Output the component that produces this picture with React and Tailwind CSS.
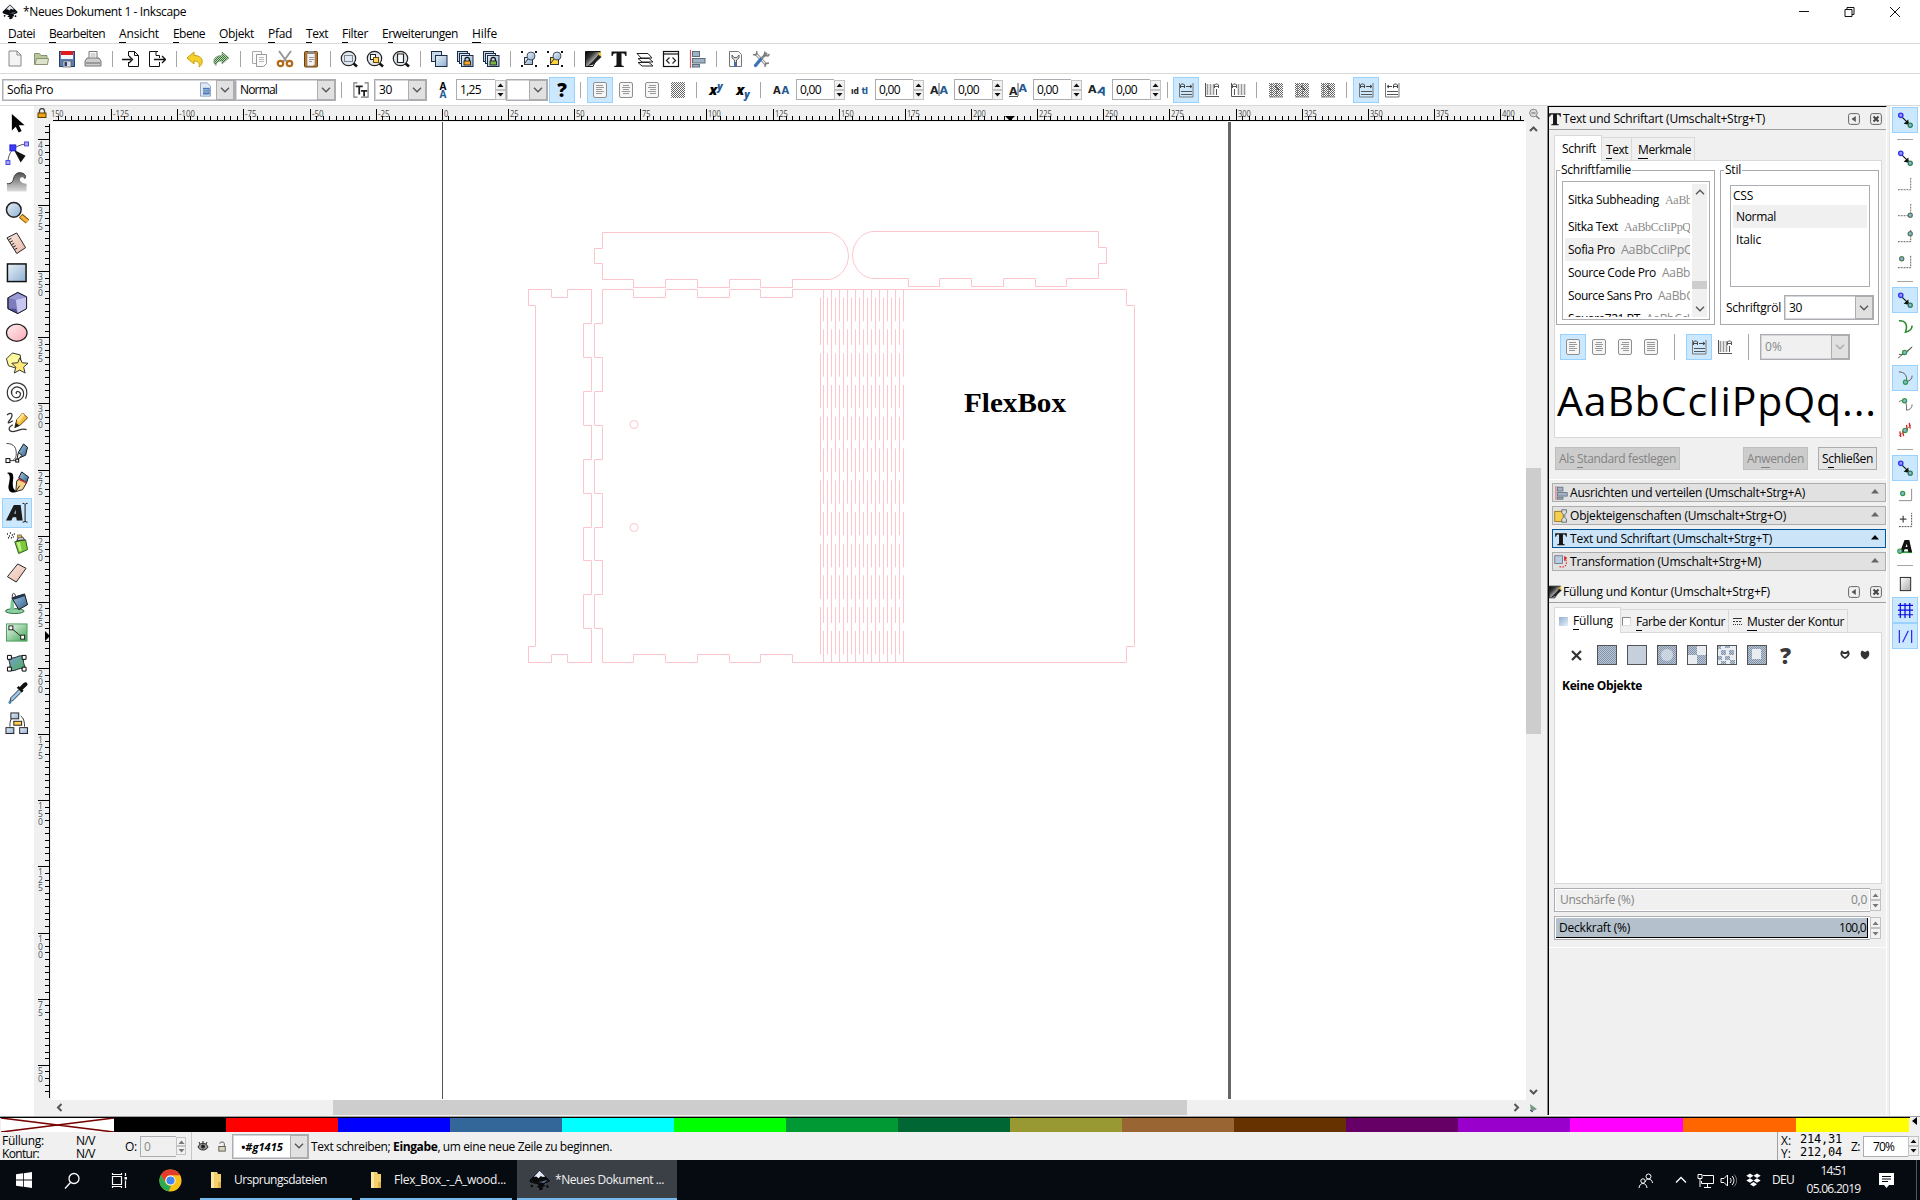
import React, { useLayoutEffect, useRef, useState } from "react";

/* Text whose tracking is adjusted so that it takes up `w` pixels. */
function T({ w, className = "", children }) {
  const ref = useRef(null);
  const [ls, setLs] = useState(0);
  useLayoutEffect(() => {
    const el = ref.current;
    if (w && el) {
      const n = el.textContent.length;
      setLs((w - el.getBoundingClientRect().width) / n);
    }
  }, []);
  return (
    <span ref={ref} className={"inline-block shrink-0 whitespace-pre " + className} style={{ letterSpacing: ls }}>
      {children}
    </span>
  );
}
const U = ({ children }) => <span className="border-b border-current leading-none">{children}</span>;

const S = ({ s = 18, v = 18, children, className = "" }) => (
  <svg width={s} height={s} viewBox={`0 0 ${v} ${v}`} fill="none" className={"shrink-0 " + className}>
    {children}
  </svg>
);

/* ---------- shared gradients ---------- */
const Defs = () => (
  <svg width="0" height="0" className="absolute">
    <defs>
      <linearGradient id="blue" x1="0" y1="0" x2="1" y2="1"><stop offset="0" stopColor="#e8f0f8" /><stop offset="1" stopColor="#8fb0d2" /></linearGradient>
      <linearGradient id="steel" x1="0" y1="0" x2="1" y2="1"><stop offset="0" stopColor="#a9cbe6" /><stop offset="1" stopColor="#2f5f8a" /></linearGradient>
      <linearGradient id="pink" x1="0" y1="0" x2="1" y2="1"><stop offset="0" stopColor="#fff0f2" /><stop offset="1" stopColor="#f9a9b4" /></linearGradient>
      <linearGradient id="peach" x1="0" y1="0" x2="1" y2="1"><stop offset="0" stopColor="#fbeae4" /><stop offset="1" stopColor="#e9b9a6" /></linearGradient>
      <linearGradient id="dark" x1="0" y1="0" x2="1" y2="1"><stop offset="0" stopColor="#000" /><stop offset=".3" stopColor="#333" /><stop offset=".75" stopColor="#fff" /></linearGradient>
      <linearGradient id="gray" x1="0" y1="0" x2="1" y2="1"><stop offset="0" stopColor="#fff" /><stop offset="1" stopColor="#aaa" /></linearGradient>
      <linearGradient id="wave" x1="0" y1="0" x2="0" y2="1"><stop offset="0" stopColor="#555" /><stop offset="1" stopColor="#ddd" /></linearGradient>
      <linearGradient id="green" x1="0" y1="0" x2="1" y2="1"><stop offset="0" stopColor="#f2faf3" /><stop offset="1" stopColor="#3fa553" /></linearGradient>
      <linearGradient id="mesh" x1="0" y1="0" x2="1" y2="1"><stop offset="0" stopColor="#7aa0d0" /><stop offset="1" stopColor="#4eae58" /></linearGradient>
      <pattern id="dots" width="2" height="2" patternUnits="userSpaceOnUse"><rect width="1" height="1" fill="#666" /><rect x="1" y="1" width="1" height="1" fill="#666" /></pattern>
      <pattern id="dotg" width="2" height="2" patternUnits="userSpaceOnUse"><rect width="2" height="2" fill="#b9dcae" /><rect width="1" height="1" fill="#3c6b3c" /><rect x="1" y="1" width="1" height="1" fill="#3c6b3c" /></pattern>
      <pattern id="dotb" width="2" height="2" patternUnits="userSpaceOnUse"><rect width="2" height="2" fill="#b9c6d6" /><rect width="1" height="1" fill="#8494a8" /><rect x="1" y="1" width="1" height="1" fill="#8494a8" /></pattern>
    </defs>
  </svg>
);

const Logo = ({ s = 16, taskbar }) => (
  <S s={s} v={16}>
    <path d="M8 .5 15.200 7.600c.8.9 0 1.600-1.200 2l-2.400.8c-.6.4.9.9.6 1.500-.2.5-1.600.4-1.700.9 0 .5.8.8.2 1.300-.9.8-2.300 1.600-3.300.9-.7-.5.5-1 .2-1.500-.4-.6-2-.3-2.200-1 .2-.7 1.800-.7 1.600-1.200C6.700 10.700 3.500 10.500 2 9.700 1 9.200 0 8.600.8 7.600z" fill="#0b0b0e" stroke={taskbar ? "#55606e" : "none"} strokeWidth=".4" />
    <path d="M8 1.200 12 5.200 10.300 5.600 8.900 4.800 7.400 6.400 5.700 5.300 4 5.600z" fill="#e4ebf6" />
    <path d="M2 8.200c3 1 7 1.200 9 0l3-.5-3 2z" fill="#6f86ad" opacity=".8" />
    <circle cx="2.600" cy="11.800" r=".9" fill="#0b0b0e" /><circle cx="13.500" cy="12.200" r=".9" fill="#0b0b0e" />
  </S>
);

/* ---------- command bar icons ---------- */
const Page = ({ x = 3, y = 1, w = 12, h = 15, f = "#fff", c = "#222" }) => (
  <path d={`M${x} ${y}h${w - 4}l4 4v${h - 4}h-${w}z M${x + w - 4} ${y}v4h4`} fill={f} stroke={c} />
);
const cmd = {
  new: <Page c="#888" f="#f4f4f4" />,
  open: <><path d="M2.500 14.500V3.500h5l1.500 2h6v9z" fill="#b9c99e" stroke="#8a9274" /><path d="m3 14.500 1.500-6h12l-1 6z" fill="#dbe4c8" stroke="#8a9274" /></>,
  save: <><rect x="1.500" y="1.500" width="15" height="15" fill="#5b7fb5" stroke="#27406d" /><rect x="3" y="1" width="12" height="4" fill="#e01b1b" /><rect x="3" y="5" width="12" height="4" fill="#f3f6fa" /><rect x="5" y="11" width="8" height="6" fill="#ddd" stroke="#555" strokeWidth=".7" /><rect x="6.500" y="12" width="2.500" height="4" fill="#27406d" /></>,
  print: <><path d="M5 8V1.500h8V8" fill="#fff" stroke="#777" /><path d="M6.500 4h5M6.500 6h5" stroke="#aaa" /><path d="M3 8h12l2 3v5H1v-5z" fill="#ccc" stroke="#777" /><path d="M2 13h14" stroke="#666" /></>,
  imp: <><path d="M6.500 6V1.500h6l4 4v11h-10V12M12.500 1.500v4h4" fill="#fff" stroke="#111" /><path d="M0 9.500h9M7 6l3.500 3.500L7 13" stroke="#111" strokeWidth="1.300" /></>,
  exp: <><path d="M10 1.500H1.500v15h10V12M8 1.500v4h3.500V8" fill="#fff" stroke="#111" /><path d="M6 9.500h11M14 6l3.500 3.500L14 13" stroke="#111" strokeWidth="1.300" /></>,
  undo: <path d="M1 8 8 2v3.500c6 0 9 3 8 7.500-.5 2-1.500 3-3 4 1-4-1-6-5-6V14z" fill="#f5cf2a" stroke="#c59e12" />,
  redo: <path d="M17 8 10 2v3.500C4 5.500 1 8.500 2 13c.5 1 1 1.500 2 2.500 0-3 2-4.500 6-4.500V14z" fill="url(#dotg)" stroke="#6a8f66" strokeWidth=".6" />,
  copy: <><path d="M2.500 1.500h9v12h-9z" fill="#fafafa" stroke="#aaa" /><path d="M6.500 4.500h10v9l-3 3h-7z" fill="#fafafa" stroke="#999" /><path d="M9 7.500h5M9 9.500h5M9 11.500h5" stroke="#bbb" /></>,
  cut: <><path d="m3 1 8 11M15 1 7 12" stroke="#999" strokeWidth="2" /><circle cx="4.500" cy="13.500" r="2.700" stroke="#b5691c" strokeWidth="2.200" /><circle cx="13.500" cy="13.500" r="2.700" stroke="#b5691c" strokeWidth="2.200" /></>,
  paste: <><rect x="2.500" y="1.500" width="13" height="15.500" rx="1" fill="#b9772a" stroke="#6d4310" /><path d="M5 3.500h8v11l-2 1.500H5z" fill="#f3f3f3" stroke="#777" strokeWidth=".6" /><path d="M7 7.500h5M7 9.500h5M7 11.500h3" stroke="#999" /><rect x="6" y="1" width="6" height="3" fill="#888" /></>,
  zoom: (k) => <><path d="m13 13 4 3.500" stroke="#111" strokeWidth="2.600" /><circle cx="8.500" cy="8.500" r="7.200" fill="#dfe8f2" stroke="#222" strokeWidth="1.200" />
    {k === 0 && <rect x="4.500" y="5.500" width="8" height="6" stroke="#222" strokeDasharray="1 1" />}
    {k === 1 && <><rect x="4.500" y="4.500" width="5" height="5" fill="#fff" stroke="#222" /><rect x="7.500" y="7.500" width="5" height="5" fill="#ffd45c" stroke="#6b4a00" /></>}
    {k === 2 && <path d="M5.500 4h6v8.500h-6z" fill="#fff" stroke="#222" strokeWidth="1.200" />}</>,
  dup: (k) => <><rect x="1.500" y="1.500" width="10" height="10" fill="#c9d9ea" stroke="#1c2c44" />{k > 0 && <rect x="3.500" y="3.500" width="10" height="10" fill="#dbe7f3" stroke="#1c2c44" />}<rect x="5.500" y="5.500" width="11.500" height="11" fill="url(#blue)" stroke="#1c2c44" />
    {k > 0 && <><path d="M9 11V9.500a2.200 2.200 0 0 1 4.400 0V11" stroke="#111" strokeWidth="1.200" /><rect x="8" y="11" width="6.500" height="4" fill={k === 1 ? "#f7a828" : "#7cb342"} stroke="#111" strokeWidth=".8" /></>}</>,
  grp: (k) => <><path d="M1 1h2v2H1zM15 1h2v2h-2zM1 15h2v2H1zM15 15h2v2h-2z" fill="#111" /><rect x="4.500" y="7.500" width="8" height="7" fill={k ? "#ffd23e" : "url(#blue)"} stroke="#333" /><circle cx="11" cy="6" r="4" fill="url(#blue)" stroke="#456" /><path d="M8 9 5 13" stroke="#333" /></>,
  fill: <><path d="M1.500 1.500h15L9 16.500H1.500z" fill="url(#dark)" stroke="#111" /><path d="M15.500 4 8 12l-4.500 4 6-1.500L17.500 7z" fill="#222" /><path d="m14 4.500 2.500-3.500 1 6z" fill="#f2c12e" /></>,
  text: <path d="M1.500 1.500h15V6h-1.200c-.3-2-1-2.700-3.800-2.700V14c0 1.500.5 1.700 2.300 1.900V17H4.200v-1.100c1.800-.2 2.300-.4 2.300-1.900V3.300C3.700 3.300 3 4 2.700 6H1.500z" fill="#151515" />,
  layers: <><path d="M2 12.500 6 16h11l-4-3.500z" fill="#fff" stroke="#222" /><path d="M2 8.500 6 12h11l-4-3.500z" fill="#fff" stroke="#222" /><path d="M1 3.500 5 8h11l-4-4.500z" fill="#fff" stroke="#222" /></>,
  xml: <><rect x="1.500" y="1.500" width="15" height="15" fill="#fff" stroke="#111" strokeWidth="1.200" /><path d="M1.500 4h15" stroke="#111" strokeWidth="1.200" /><path d="m7.500 7.500-3 3 3 3M10.500 7.500l3 3-3 3" stroke="#222" strokeWidth="1.200" /></>,
  align: <><path d="M2.500 0v18" stroke="#d85a5a" strokeWidth="1.200" /><rect x="4.500" y="1.500" width="7" height="5" fill="#9fb1c4" stroke="#5d6c7c" /><rect x="4.500" y="8.500" width="12.500" height="4.500" fill="#9fb1c4" stroke="#5d6c7c" /><rect x="4.500" y="14.500" width="7" height="2.500" fill="#9fb1c4" stroke="#5d6c7c" /></>,
  prefs: <><path d="M3.500 1.500h9l3 3v12h-12z" fill="#fafafa" stroke="#777" /><path d="M6 5v3l2.500 2v6.500h2V10L13 8V5l-2 2.500H8z" fill="#ddd" stroke="#555" strokeWidth=".9" /><path d="M8.500 12h2v5h-2z" fill="#3d73b8" /></>,
  tools: <><path d="m3.500 3.500 11 11.500" stroke="#888" strokeWidth="3" /><path d="m3.500 3.500 11 11.500" stroke="#eee" strokeWidth="1.200" /><path d="m15 3-6 6" stroke="#888" strokeWidth="2.600" /><path d="m8.500 9.500-5 6" stroke="#3d73b8" strokeWidth="3.400" strokeLinecap="round" /><path d="M1 4.500 3.500 5 5 3.500 4.500 1M13 1.500l-1 4 4 .5 1.500-2M13 17l.5-3.500L17 13" stroke="#777" strokeWidth="1.300" /></>,
};
const commands = [
  cmd.new, cmd.open, cmd.save, cmd.print, null, cmd.imp, cmd.exp, null, cmd.undo, cmd.redo, null, cmd.copy, cmd.cut, cmd.paste, null,
  cmd.zoom(0), cmd.zoom(1), cmd.zoom(2), null, cmd.dup(0), cmd.dup(1), cmd.dup(2), null, cmd.grp(0), cmd.grp(1), null,
  cmd.fill, cmd.text, cmd.layers, cmd.xml, cmd.align, null, cmd.prefs, cmd.tools,
];

/* ---------- small widgets ---------- */
const Chev = ({ c = "#555" }) => <svg width="10" height="6" viewBox="0 0 10 6"><path d="M1 .8 5 4.800 9 .8" fill="none" stroke={c} strokeWidth="1.300" /></svg>;
const ArrowBtn = ({ dis }) => (
  <div className="h-full w-[18px] shrink-0 bg-[#e1e1e1] border border-[#adadad] flex items-center justify-center"><Chev c={dis ? "#aaa" : "#555"} /></div>
);
const Combo = ({ className, children, dis }) => (
  <div className={"flex items-stretch shrink-0 border border-[#abadb3] shadow-[inset_0_0_0_1px_#d5d6d9] " + (dis ? "bg-[#f0f0f0] " : "bg-white ") + className}>
    <div className="flex-1 flex items-center pl-1 min-w-0 overflow-hidden">{children}</div>
    <ArrowBtn dis={dis} />
  </div>
);
const Spinner = ({ dis, className = "w-[11px] h-[20px]" }) => {
  const c = dis ? "#777" : "#111";
  return (
    <div className={"flex flex-col shrink-0 " + className}>
      {[0, 1].map((i) => (
        <div key={i} className="flex-1 border border-[#c2c2c2] bg-[#f2f2f2] flex items-center justify-center">
          <svg width="7" height="4" viewBox="0 0 7 4"><path d={i ? "M.5 0h6L3.500 3.500z" : "M.5 4h6L3.500.5z"} fill={c} /></svg>
        </div>
      ))}
    </div>
  );
};
const SpinBox = ({ className, children }) => (
  <div className={"flex items-center shrink-0 " + className}>
    <div className="flex-1 h-[21px] border border-[#abadb3] border-r-0 bg-white flex items-center pl-[3px]">{children}</div>
    <Spinner />
  </div>
);
const Sep = ({ className = "h-4" }) => <div className={"w-px bg-[#a6a6a6] shrink-0 " + className} />;
const Cell = ({ on, className = "", children }) => (
  <div className={"w-[26px] h-[26px] shrink-0 flex items-center justify-center border " + (on ? "bg-[#cce8ff] border-[#99d1ff] " : "border-transparent ") + className}>{children}</div>
);
const Al = ({ k }) => (
  <S s={16} v={16}><rect x="1.500" y=".5" width="13" height="15" rx="1.500" fill="#f6f6f6" stroke="#8f8f8f" />
    <path d={["M4 3.500h7M4 5.500h8M4 7.500h6M4 9.500h8M4 11.500h6", "M5 3.500h6M4 5.500h8M5 7.500h6M4 9.500h8M5 11.500h6", "M5 3.500h7M4 5.500h8M6 7.500h6M4 9.500h8M6 11.500h6", "M4 3.500h8M4 5.500h8M4 7.500h8M4 9.500h8M4 11.500h8"][k]} stroke="#999" /></S>
);
const Dir = ({ k, dis }) => (
  <S s={16} v={16}>
    {dis ? <><rect x="1" y="1" width="14" height="14" fill="url(#dots)" /><path d="M3.500 1v14M8.500 1v14M1 15h14" stroke="#888" /><path d="M7 4l4 4-4 4" stroke="#555" /></> : k === 1 || k === 2 ? <>
      <path d="M1.500 1v13.500H15" stroke="#555" /><path d={k === 1 ? "M3.500 2v11M6.500 2v11M9.500 2v11" : "M8.500 2v11M11.500 2v11M14.500 2v11"} stroke="#999" strokeWidth="1.600" /><path d={k === 1 ? "M10.500 6V3l1-1h2l1 1v3M10.500 4.500h4M12.500 7v6" : "M2.500 6V3l1-1h2l1 1v3M2.500 4.500h4M4.500 7v6"} stroke="#555" /></> : <>
      <path d="M1.500 1v14H15V1" stroke="#777" /><path d={k === 3 ? "M9.500 6V3l1-1h2l1 1v3M9.500 4.500h4M3 4.500h5M5 3 3 4.500 5 6" : "M2.500 6V3l1-1h2l1 1v3M2.500 4.500h4M8 4.500h6M12 3l2 1.500L12 6"} stroke="#444" /><path d="M3 9.500h11M3 12.500h11" stroke="#555" /></>}
  </S>
);

/* ---------- rulers ---------- */
const K = 66.143;
function HRuler() {
  const t = [];
  for (let i = -60; i <= 165; i++) {
    const x = Math.floor(442.3 + (i * K) / 10) - 51;
    if (x < 1.500 || x > 1473) continue;
    const major = i % 10 === 0;
    const v = (i / 10) * 25;
    t.push(<path key={i} d={`M${x + 0.5} ${major ? 3 : 10}V15`} stroke="#000" />);
    if (major) t.push(<text key={"t" + i} x={x + 2} y="11" fontSize="9" textLength={String(Math.abs(v)).length * 4.300 + (v < 0 ? 3 : 0)} lengthAdjust="spacingAndGlyphs" fill="#444">{v}</text>);
  }
  return (
    <svg width="1475" height="16" className="shrink-0" fontFamily="Open Sans, sans-serif">
      <text x="0" y="11" fontSize="9" textLength="12.500" lengthAdjust="spacingAndGlyphs" fill="#444">150</text>
      {t}<path d="M2 14.500H1473" stroke="#000" /><path d="M954 10h10l-5 5z" fill="#000" />
    </svg>
  );
}
function VRuler() {
  const t = [];
  for (let i = -5; i <= 160; i++) {
    const y = Math.floor(139.300 + (i * K) / 10) - 122;
    if (y < 1 || y > 975) continue;
    const major = i % 10 === 0;
    t.push(<path key={i} d={`M${major ? 4 : 11} ${y + 0.5}H16`} stroke="#000" />);
    if (major)
      String(400 - (i / 10) * 25).split("").forEach((c, j) => t.push(<text key={i + "-" + j} x="4" y={y + 8.500 + j * 8} fontSize="8.500" fill="#456">{c}</text>));
  }
  return (
    <svg width="17" height="978" className="shrink-0" fontFamily="Open Sans, sans-serif">
      {t}<path d="M15.500 2V976" stroke="#000" /><path d="M11 509v10l5-5z" fill="#000" />
    </svg>
  );
}

/* ---------- drawing ---------- */
const ys = [323.5, 357.5, 391.5, 425.5, 459.5, 493.5, 527.5, 560.5, 594.5, 628.5];
const evenSeg = [[263, 405], [430, 595], [620, 786], [811, 976], [1001, 1167], [1191, 1333]];
const oddSeg = [[238, 334], [358, 500], [525, 691], [715, 881], [906, 1072], [1096, 1239], [1263, 1357]];
function Drawing() {
  const left = "M528.500 289.500H551.500V297.500H567.500V289.500H591.500" + ys.map((y, i) => `V${y}H${i % 2 ? 591.5 : 583.5}`).join("") + "V662.500H567.500V654.500H551.500V662.500H528.500V646.500H535.500V305.500H528.500Z";
  const main = "M602.500 289.500" + ys.map((y, i) => `V${y}H${i % 2 ? 602.5 : 594.5}`).join("") + "V662.500H633.500V654.500H665.500V662.500H697.500V654.500H729.500V662.500H760.500V654.500H792.500V662.500H1126.500V646.500H1134.500V305.500H1126.500V289.500H792.500V297.500H760.500V289.500H729.500V297.500H697.500V289.500H665.500V297.500H633.500V289.500Z";
  return (
    <svg width="1475" height="978" viewBox="51 122 1475 978" className="shrink-0 bg-white">
      <path d="M442.500 122V1099" stroke="#555" />
      <rect x="1228" y="122" width="3" height="977" fill="#666" />
      <g fill="none" stroke="#ffc5cc">
        <path d={left} /><path d={main} />
        <path d="M602.500 232.500H829.500A24 24 0 0 1 829.500 279.500H792.500V287.500H760.500V279.500H729.500V287.500H697.500V279.500H665.500V287.500H633.500V279.500H602.500V263.500H594.500V248.500H602.500Z" />
        <path d="M871.500 231.500H1098.500V247.500H1106.500V263.500H1098.500V278.500H1066.500V286.500H1035.500V278.500H1003.500V286.500H971.500V278.500H939.500V286.500H908.500V278.500H871.500A24 24 0 0 1 871.500 231.500Z" />
        {Array.from({ length: 22 }, (_, i) => (
          <path key={i} d={(i % 2 ? oddSeg : evenSeg).map(([a, b]) => `M${Math.floor(820 + i * 3.98) + 0.5} ${210 + a / 3}V${210 + b / 3}`).join("")} />
        ))}
        <circle cx="634" cy="424.500" r="4" /><circle cx="634" cy="527.500" r="4" />
      </g>
      <text x="964" y="411.500" fontSize="28" fontWeight="700" fontFamily="Liberation Serif, serif" textLength="102" lengthAdjust="spacingAndGlyphs">FlexBox</text>
    </svg>
  );
}

/* ---------- toolbox ---------- */
const tools = [
  <path d="M7 3v17l4-4 3 6 3-1.500-3-6h6z" fill="#000" />,
  <><path d="M3 22C3 12 9 4 22 3" stroke="#555" /><path d="m9 9 12 6-5 7z" fill="#111" /><rect x="5" y="4" width="6" height="6" fill="#3c3cff" stroke="#22c" /><rect x="20" y="1" width="4" height="4" fill="#aaf" stroke="#44d" /><rect x="1" y="20" width="4" height="4" fill="#aaf" stroke="#44d" /></>,
  <><path d="M2 13c5 0 6-2 7-6 1-4 4-6 8-5 4 1 5 4 3 6-1-2-3-2-4-1-2 2 0 6 6 6v8H2z" fill="url(#wave)" /><path d="M2 13c5 0 6-2 7-6 1-4 4-6 8-5 4 1 5 4 3 6" stroke="#333" /></>,
  <><path d="m16 15 7 6" stroke="#7a4b00" strokeWidth="5.500" /><path d="m16.500 15.500 6.500 5.500" stroke="#f6b33a" strokeWidth="3.500" /><circle cx="9" cy="9" r="7.500" fill="url(#blue)" stroke="#222" strokeWidth="1.500" /></>,
  <><path d="M2 7 12 2l9 15-9 6z" fill="url(#peach)" stroke="#222" /><path d="m3.500 9 3-1.500M5 11.500l3-1.500M6.500 14l3-1.500M8 16.500l3-1.500M9.500 19l3-1.500" stroke="#222" /></>,
  <rect x="2.500" y="3" width="19" height="18" fill="url(#blue)" stroke="#111" strokeWidth="1.500" />,
  <><path d="M3 7 13 1.500 22 6v12l-9 5L3 18z" fill="#7d7dbd" stroke="#223" /><path d="m11 9 11-3v12l-9 5z" fill="#c7c7ef" /><path d="M3 7 13 2l9 4-11 3z" fill="#9a9ad4" /><path d="M3 18h8l2 5" fill="#4d4d96" /><path d="M3 7 13 1.500 22 6v12l-9 5L3 18z" stroke="#223" /></>,
  <ellipse cx="12" cy="12" rx="10.500" ry="8.800" fill="url(#pink)" stroke="#222" strokeWidth="1.300" />,
  <><path d="m1.500 8 6-6 8 2 1 8-7 5-6-2z" fill="#fff9a0" stroke="#333" /><path d="m15 7 2.500 5 6 .5-4.500 4 1.500 6-5.500-3-5.500 3 1.500-6-4-4 6-.5z" fill="#ffe97a" stroke="#333" /></>,
  <path d="M12 13c-1.500-1 0-3 2-2 3 1 2 6-2 6-5 0-7-6-4-9 4-4 11-1 11 5 0 6-7 9-12 7C1 17 1 8 6 4c5-4 14-2 16 5 .8 3 .4 6-1 9" stroke="#333" strokeWidth="1.200" />,
  <><path d="M2 4c5-4 7 0 3 5s0 3 3 1M8 14c-6 3-4 7 0 7 6 0 8-4 14-2" stroke="#333" strokeWidth="1.300" /><path d="m10 17 2-8 6-7 5 5-7 7z" fill="#f8bd3c" stroke="#5a3c00" /><path d="m12 9 6-7 2 2-6 8z" fill="#ffe28a" /><path d="m10 17 1-5 4 3z" fill="#222" /></>,
  <><path d="M1.500 2.500c9 0 10 6 10 10.500S9 19 8 20" stroke="#444" /><path d="M3 20h10" stroke="#444" /><path d="m13 18 1-7 5-8 4 3.500-2 8z" fill="url(#steel)" stroke="#111" /><path d="m12 20 1.500-8 4 2.500z" fill="#eee" stroke="#222" /><rect x="1" y="18" width="4" height="4" fill="#fff" stroke="#000" /><rect x="11" y="18.500" width="3" height="3" fill="#fff" stroke="#000" /></>,
  <><path d="M2 2c7-2 7 3 6 9-.5 6 1 9 5 10-7 3-11-1-9-8 1-5 2-9-2-11z" fill="#000" /><path d="m11 21 1-11 5-3 5 5-4 7z" fill="#f7d38a" stroke="#222" /><path d="m11 21 4-6" stroke="#222" /><path d="m14 7 3-6 7 5-2 6z" fill="url(#steel)" stroke="#111" /><path d="m13 8 9 4" stroke="#b33" strokeWidth="1.500" /></>,
  <><path d="M1 20 9 4h7l2 16h-6l-.5-3.500H8L6.500 20zM9.500 13H11l-.3-4z" fill="#1b1b1b" fillRule="evenodd" /><path d="M18 2.500h1.500l1 1 1-1H23M18 21.500h1.500l1-1 1 1H23M20.500 3.500v17" stroke="#111" /></>,
  <><path d="M2 3h1M5 2h1M4 5h1M7 4h1M3 7h1M6 7h1M8 6h1M9 3h1" stroke="#111" strokeWidth="1.500" /><path d="m10 11 11-2 2 10-9 4z" fill="#7fc93c" stroke="#245c10" /><path d="m12 12 3-1 2 9-2 1z" fill="#c4f08e" /><path d="m12 10 2-4 4 0 2 3z" fill="#ccd" stroke="#333" /><rect x="13" y="4" width="4" height="3" fill="#e8b23a" stroke="#444" strokeWidth=".6" /></>,
  <path d="M2.500 16 13 3l8.500 4.500-10 14z" fill="url(#peach)" stroke="#222" />,
  <><ellipse cx="10" cy="20.500" rx="9.500" ry="2.500" fill="#8ed1a4" stroke="#2b6b3e" /><path d="M7 8c-2 3-1 8-2 12h4c1-4-1-9 1-12z" fill="#7cc796" /><path d="m7 7 13-4 3 11-9 5z" fill="url(#steel)" stroke="#111" /><path d="m7 7 13-4 .5 2L9 9z" fill="#23344e" /><path d="M8 8C6 2 10 0 11 6" stroke="#333" /></>,
  <><rect x="1.500" y="3" width="21" height="17.500" fill="url(#green)" stroke="#4d9d5d" /><path d="m6 7 12 10" stroke="#222" /><rect x="4" y="5" width="4" height="4" fill="#fff" stroke="#222" /><rect x="16" y="14.500" width="4" height="4" fill="#fff" stroke="#222" /></>,
  <><path d="M4 6c6 4 10-4 16 0-3 6 1 8 0 13-6-4-10 4-16 0 3-6-1-8 0-13z" fill="url(#mesh)" stroke="#223" /><path d="M2.500 4.500h4v4h-4zM17.500 4.500h4v4h-4zM2.500 16.500h4v4h-4zM17.500 16.500h4v4h-4z" fill="#fff" stroke="#000" /></>,
  <><path d="m14 9-8 8-1 4 3-1 8-8" fill="#9cc3ea" stroke="#234" /><path d="m12 7 5 5 2-2-1-1 5-5c0-3-2-3-4-2l-4 4-1-1z" fill="#111" /><circle cx="5" cy="22" r="1.500" fill="#48a" /></>,
  <><path d="M9 6C5 8 5 12 5 16M16 5c3 2 4 6 4 11" stroke="#333" /><rect x="6" y="2" width="8" height="6" fill="url(#blue)" stroke="#222" /><rect x="9" y="10.500" width="8" height="4" fill="#ffd24a" stroke="#222" /><rect x="1" y="17" width="8" height="6" fill="url(#blue)" stroke="#222" /><rect x="15" y="17" width="8" height="6" fill="url(#blue)" stroke="#222" /></>,
];

/* ---------- snap bar ---------- */
const N = ({ x, y, c = "#2f9a3c" }) => <circle cx={x} cy={y} r="2.200" fill="#8ab4e8" stroke={c} strokeWidth="1.300" />;
const chain = <><path d="M4 4 14 14" stroke="#111" strokeWidth="1.200" /><path d="m12 8 .5 5.500L7 12.500z" fill="#111" /><circle cx="4" cy="3.500" r="2.300" fill="#99f" stroke="#33e" strokeWidth="1.400" /><N x={14} y={14} c="#2a7d46" /></>;
const dash = (o) => <path d="M1 14.500h13.500V1" stroke="#555" strokeDasharray="2 1" opacity={o} />;
const snaps = [
  [chain, 1], null, [chain], [dash(0.9)], [<>{dash(0.9)}<N x={14} y={14} c="#575" /></>], [<>{dash(1)}<N x={14} y={6} c="#575" /></>], [<>{dash(1)}<N x={5} y={5} c="#575" /></>], null,
  [chain, 1], [<path d="M2 3c6-1 10 3 7 12 5-1 7-4 7-7" stroke="#2b8a2b" strokeWidth="1.600" />], [<><path d="M1 15 16 3M2 11c6 1 10-3 14-8" stroke="#555" /><N x={8} y={9} /></>],
  [<><path d="M2 2c6 0 9 4 8 10 4 0 6-3 6-6" stroke="#555" /><N x={9} y={13} /></>, 1], [<><path d="M2 6c5-3 9-1 8 9 4 0 6-3 6-6" stroke="#666" /><N x={8} y={5} /></>], [<><path d="m2 15 13-12" stroke="#777" /><path d="m3 10 1 6M6 9l1 6M10 3l1 6M13 1l1 6" stroke="#d22" strokeWidth="1.400" /><N x={8.5} y={9} /></>], null,
  [chain, 1], [<><path d="M2 15.500h13.500V3" stroke="#888" /><N x={6} y={8} /></>], [<><path d="M2 15.500h13.500V1" stroke="#444" strokeDasharray="2 1" /><path d="M3 7.500h7M6.500 4v7" stroke="#444" strokeWidth="1.300" /></>], [<><path d="M1 15h15" stroke="#3a9a4a" strokeWidth="2" /><path d="M3 15 8 2h5l3 13h-4l-.6-3H8L7 15zM9 9.500h2L10.500 6z" fill="#111" fillRule="evenodd" /><N x={3} y={14} /></>], null,
  [<rect x="3.500" y="1.500" width="11" height="14" fill="url(#gray)" stroke="#222" />], [<path d="M1 3.500h16M1 8.500h16M1 13.500h16M3.500 1v16M8.500 1v16M13.500 1v16" stroke="#0808e0" strokeWidth="1.300" />, 1], [<path d="M2.500 2v14M15.500 2v14M6 15l6-12" stroke="#2a2af0" strokeWidth="1.300" />, 1],
];

/* ---------- dock ---------- */
const WinBtn = ({ close }) => (
  <S s={12} v={12}><rect x=".6" y=".6" width="10.800" height="10.800" rx="2" stroke="#666" />{close ? <path d="m3.500 3.500 5 5m0-5-5 5" stroke="#444" strokeWidth="2" /> : <path d="M7.800 3v6L3.500 6z" fill="#555" />}</S>
);
const Header = ({ icon, children }) => (
  <div className="h-[23px] flex items-center shrink-0 border-b border-[#a0a0a0] pr-[4px] pt-px">
    <S s={14} v={18} className="-ml-px mr-px">{icon}</S>{children}<div className="flex-1" /><WinBtn /><div className="w-[10px]" /><WinBtn close />
  </div>
);
const Btn = ({ className, dis, children }) => (
  <div className={"h-[23px] border flex items-center justify-center shrink-0 " + (dis ? "bg-[#ccc] border-[#bfbfbf] text-[#838383] " : "bg-[#e5e5e5] border-[#adadad] ") + className}>{children}</div>
);
const Tab = ({ on, className, children }) => (
  <div className={"flex items-center shrink-0 border border-[#d9d9d9] border-b-0 relative pt-px " + (on ? "bg-white h-[26px] -mb-px z-10 " : "bg-[#f0f0f0] h-[23px] border-l-0 ") + className}>{children}</div>
);
const DockItem = ({ icon, on, w, children }) => (
  <div className={"h-[19px] mb-1 border flex items-center pr-[6px] " + (on ? "bg-[#cce4f7] border-[#005499]" : "bg-[#e1e1e1] border-[#adadad]")}>
    <S s={14} v={18} className="ml-px mr-[2px]">{icon}</S><T w={w}>{children}</T><div className="flex-1" />
    <svg width="8" height="5" className="mb-[3px]"><path d="M0 4.500 4 0l4 4.500z" fill={on ? "#000" : "#666"} /></svg>
  </div>
);
const Fam = ({ n, w, s, h, on, f = "" }) => (
  <div className={"flex items-center pl-[3px] shrink-0 overflow-hidden " + h + (on ? " bg-[#f0f0f0]" : "")}><T w={w}>{n}</T><span className={"ml-[6px] text-[#8a8a8a] whitespace-pre tracking-tight " + f}>{s}</span></div>
);
const Legend = ({ children, w }) => <div className="absolute -top-[10px] left-[3px] bg-white px-px leading-[18px]"><T w={w}>{children}</T></div>;

function Dock() {
  return (
    <div className="w-[342px] shrink-0 flex flex-col bg-[#f0f0f0] border-l border-[#888] h-[1009px]">
      <div className="flex-1 border-l border-t border-l-black border-t-black flex flex-col w-[339px] border-r border-r-white">
        <Header icon={cmd.text}><T w={202}>Text und Schriftart (Umschalt+Strg+T)</T></Header>
        <div className="ml-[5px] mt-[5px] w-[328px] flex items-end h-[25px]">
          <Tab on className="w-12 pl-[7px]"><T w={34}>Schrift</T></Tab>
          <Tab className="w-[30px] pl-1"><T w={22}><U>T</U>ext</T></Tab>
          <Tab className="w-[63px] pl-[6px]"><T w={53}><U>M</U>erkmale</T></Tab>
        </div>
        <div className="ml-[5px] w-[328px] h-[278px] shrink-0 bg-white border border-[#d9d9d9] flex flex-col">
          <div className="flex mt-[9px] ml-px gap-[5px]">
            <div className="relative w-[159px] h-[155px] border border-[#a9a9a9] pl-[5px] pt-[10px]">
              <Legend w={70}>Schriftfamilie</Legend>
              <div className="w-[148px] h-[139px] border border-[#abadb3] p-[2px] flex">
                <div className="w-[126px] overflow-hidden flex flex-col">
                  <Fam n="Sitka Subheading" w={91} s="AaBbCc" h="h-[32px]" f="font-['Liberation_Serif']" />
                  <Fam n="Sitka Text" w={50} s="AaBbCcIiPpQq" h="h-[22px]" f="font-['Liberation_Serif']" />
                  <Fam n="Sofia Pro" w={47} s="AaBbCcIiPpQq" h="h-[23px]" on f="text-[12.500px]" />
                  <Fam n="Source Code Pro" w={88} s="AaBbCc" h="h-[23px]" />
                  <Fam n="Source Sans Pro" w={84} s="AaBbCc" h="h-[23px]" />
                  <Fam n="Square721 BT" w={72} s="AaBbCcIi" h="h-[23px]" />
                </div>
                <div className="ml-[2px] w-[15px] bg-[#f0f0f0] flex flex-col items-center">
                  <div className="h-[17px] flex items-center rotate-180"><Chev /></div>
                  <div className="mt-[80px] h-2 w-[15px] bg-[#cdcdcd]" />
                  <div className="flex-1" /><div className="h-[17px] flex items-center"><Chev /></div>
                </div>
              </div>
            </div>
            <div className="relative w-[159px] h-[155px] border border-[#a9a9a9]">
              <Legend w={16}>Stil</Legend>
              <div className="mt-[14px] ml-[9px] w-[140px] h-[102px] border border-[#abadb3] p-px">
                <div className="h-[18px] flex items-center pl-px"><T w={20}>CSS</T></div>
                <div className="h-[23px] flex items-center pl-[3px] bg-[#f0f0f0] mx-px"><T w={40}>Normal</T></div>
                <div className="h-[23px] flex items-center pl-[3px] mx-px"><T w={25}>Italic</T></div>
              </div>
              <div className="mt-[8px] ml-[5px] flex items-center">
                <T w={55}>Schriftgröl</T>
                <Combo className="ml-[3px] w-[90px] h-[25px]"><T w={13}>30</T></Combo>
              </div>
            </div>
          </div>
          <div className="flex items-center mt-[9px] ml-[5px]">
            <Cell on><Al k={0} /></Cell><Cell><Al k={1} /></Cell><Cell><Al k={2} /></Cell><Cell><Al k={3} /></Cell>
            <Sep className="ml-[10px] h-[26px]" /><Cell on className="ml-[11px]"><Dir k={0} /></Cell><Cell><Dir k={1} /></Cell>
            <Sep className="ml-[10px] h-[26px]" /><Combo dis className="ml-[11px] w-[90px] h-[26px] text-[#888]"><T w={17}>0%</T></Combo>
          </div>
          <div className="flex-1 flex items-center ml-[2px] text-[41px] leading-none mt-[3px]"><T w={320}>AaBbCcIiPpQq...</T></div>
        </div>
        <div className="flex mt-[9px] ml-[6px] shrink-0">
          <Btn dis className="w-[125px]"><T w={117}>Als <U>S</U>tandard festlegen</T></Btn>
          <Btn dis className="w-[65px] ml-[63px]"><T w={57}>An<U>w</U>enden</T></Btn>
          <Btn className="w-[59px] ml-[10px]"><T w={51}>S<U>c</U>hließen</T></Btn>
        </div>
        <div className="mt-[9px] border-t border-white pt-[3px] pl-[3px] flex flex-col shrink-0">
          <DockItem icon={cmd.align} w={235}>Ausrichten und verteilen (Umschalt+Strg+A)</DockItem>
          <DockItem w={216} icon={<><rect x="1" y="3" width="12" height="13" fill="#f6d04a" stroke="#8a6a10" /><path d="M10 1h6v4l-2 2v4l2 2v4h-6v-4l2-2V7l-2-2z" fill="#d8dde2" stroke="#555" /></>}>Objekteigenschaften (Umschalt+Strg+O)</DockItem>
          <DockItem icon={cmd.text} on w={202}>Text und Schriftart (Umschalt+Strg+T)</DockItem>
          <DockItem w={191} icon={<><rect x="1" y="1" width="10" height="10" fill="#b8cde4" stroke="#667" /><path d="M15 6c3 6-1 11-8 9" stroke="#d33" strokeWidth="1.500" strokeDasharray="2 1.500" /><path d="m13 1 4 3-4 4z" fill="#d22" /></>}>Transformation (Umschalt+Strg+M)</DockItem>
        </div>
        <div className="mt-[5px]"><Header icon={cmd.fill}><T w={207}>Füllung und Kontur (Umschalt+Strg+F)</T></Header></div>
        <div className="ml-[5px] mt-[4px] w-[328px] flex items-end h-[25px]">
          <Tab on className="w-[67px] pl-1"><div className="size-[9px] mr-[5px] bg-linear-to-br from-[#8fb0d2] to-[#e8f0f8]" /><T w={40}><U>F</U>üllung</T></Tab>
          <Tab className="w-[108px] pl-px"><div className="size-[9px] mr-[5px] border border-[#888] border-r-[#ddd] border-b-[#ddd] bg-white" /><T w={89}><U>F</U>arbe der Kontur</T></Tab>
          <Tab className="w-[119px] pl-1"><S s={9} v={9} className="mr-[5px]"><path d="M0 1.500h9" stroke="#333" /><path d="M0 4.500h9" stroke="#333" strokeDasharray="2 1" /><path d="M0 7.500h9" stroke="#333" strokeDasharray="1 1" /></S><T w={97}><U>M</U>uster der Kontur</T></Tab>
        </div>
        <div className="ml-[5px] w-[328px] h-[252px] shrink-0 bg-white border border-[#d9d9d9]">
          <div className="flex items-center mt-[12px] pl-[16px] h-5">
            <S s={11} v={11}><path d="m1 1 9 9M10 1 1 10" stroke="#333" strokeWidth="2.200" /></S>
            {[0, 1, 2, 3, 4, 5].map((i) => (
              <S key={i} s={20} v={20} className={i ? "ml-[10px]" : "ml-[15px]"}>
                <rect x=".5" y=".5" width="19" height="19" fill={[0, 2].includes(i) ? "url(#dotb)" : i === 1 ? "#c6d0dc" : "#e9edf2"} />
                {i === 2 && <circle cx="10" cy="10" r="6" fill="#dde5ee" opacity=".7" />}
                {i === 3 && <path d="M0 0h10v10H0zM10 10h10v10H10z" fill="url(#dotb)" />}
                {i === 4 && <path d="M0 0h4v4H0zM8 0h5v3H8zM4 5h5v5H4zM12 5h5v5h-5zM0 11h5v4H0zM8 11h5v4H8zM4 16h5v3H4zM13 15h5v4h-5z" fill="url(#dotb)" />}
                {i === 5 && <path d="M1 1h18v18H1zM5 4h9v10H5z" fillRule="evenodd" fill="url(#dotb)" />}
                <rect x=".5" y=".5" width="19" height="19" stroke="#777" /><rect x=".5" y=".5" width="19" height="19" stroke="#333" strokeDasharray="1 1" />
              </S>
            ))}
            <span className="ml-[13px] w-[14px] text-[22px] leading-[20px] font-extrabold text-[#3a3a3a]">?</span>
            <S s={10} v={10} className="ml-[46px]"><path d="M2 1.500c-1.500 2-.5 5 3 6.500 3.500-1.500 4.500-4.500 3-6.500L6.500 3h-3z" stroke="#333" strokeWidth="1.800" /></S>
            <S s={10} v={10} className="ml-[10px]"><path d="M2 .5C-.5 3 .5 7.500 5 9.500 9.500 7.500 10.500 3 8 .5L5 2z" fill="#333" /></S>
          </div>
          <div className="mt-[13px] pl-[7px] font-bold"><T w={80}>Keine Objekte</T></div>
        </div>
        <div className="ml-[5px] mt-[4px] w-[328px] h-6 flex shrink-0 items-center">
          <div className="w-[316px] h-6 border border-[#abadb3] border-r-0 bg-[#f0f0f0] flex items-center justify-between pl-[5px] pr-[3px] text-[#838383] shadow-[inset_0_0_0_1px_white]"><T w={74}>Unschärfe (%)</T><T w={16}>0,0</T></div>
          <Spinner dis className="w-[11px] h-[22px]" />
        </div>
        <div className="ml-[5px] mt-[4px] w-[328px] h-6 flex shrink-0 items-center">
          <div className="w-[316px] h-6 border border-[#abadb3] border-r-0 bg-white p-[1px] pr-[2px]">
            <div className="size-full bg-[#b4c1cc] border-b border-r border-black flex items-center justify-between pl-[3px] pr-px"><T w={71}>Deckkraft (%)</T><T w={27}>100,0</T></div>
          </div>
          <Spinner dis className="w-[11px] h-[22px]" />
        </div>
        <div className="mt-[7px] border-t border-white" />
      </div>
    </div>
  );
}

const menus = [["", "D", "atei", 27, ""], ["", "B", "earbeiten", 56, "ml-[14px]"], ["", "A", "nsicht", 40, "ml-[14px]"], ["", "E", "bene", 32, "ml-[14px]"], ["", "O", "bjekt", 35, "ml-[14px]"], ["", "P", "fad", 24, "ml-[14px]"], ["", "T", "ext", 22, "ml-[14px]"], ["", "F", "ilter", 26, "ml-[14px]"], ["E", "r", "weiterungen", 76, "ml-[14px]"], ["", "H", "ilfe", 25, "ml-[14px]"]];
const palette = [
  ["w-[112px]", "bg-black"], ["w-[112px]", "bg-[#ff0000]"], ["w-[112px]", "bg-[#0000ff]"], ["w-[112px]", "bg-[#336699]"], ["w-[112px]", "bg-[#00ffff]"], ["w-[112px]", "bg-[#00ff00]"], ["w-[112px]", "bg-[#009933]"], ["w-[112px]", "bg-[#006633]"],
  ["w-[112px]", "bg-[#999933]"], ["w-[112px]", "bg-[#996633]"], ["w-[112px]", "bg-[#663300]"], ["w-[112px]", "bg-[#660066]"], ["w-[112px]", "bg-[#9900cc]"], ["w-[113px]", "bg-[#ff00ff]"], ["w-[113px]", "bg-[#ff6600]"], ["w-[113px]", "bg-[#ffff00]"],
];
const KernIcon = ({ k }) => (
  <S s={18} v={18}>
    <g fontFamily="DejaVu Sans, sans-serif" fontWeight="700" fontSize="11" fill="#222">
      {k === 0 && <><text x="1" y="13" fontSize="10">A</text><text x="9.500" y="13" fontSize="10" fill="#245a94">A</text></>}
      {k === 1 && <><text x="0" y="13" fontSize="9" textLength="8" lengthAdjust="spacingAndGlyphs">ıd</text><text x="10.500" y="13" fontSize="9" fill="#245a94" textLength="6.500">tl</text></>}
      {k === 2 && <><text x="0" y="13">A</text><text x="9.500" y="13" fill="#245a94">A</text><path d="M9 2v13" stroke="#555" /></>}
      {k === 3 && <><text x="0" y="14">A</text><text x="9.500" y="11" fill="#245a94">A</text><path d="M9 2v13M0 15.500h9" stroke="#555" /></>}
      {k === 4 && <><text x="0" y="12">A</text><text x="9" y="13" fill="#245a94" transform="rotate(20 12 12)">A</text></>}
    </g>
  </S>
);
const Folder = () => <S s={18} v={18}><path d="M4 1h6l1 2h3v14H4z" fill="#f5cf6e" /><path d="M4 1h3v16H4z" fill="#fbe6a4" /><path d="M11 11h3v6h-3z" fill="#e2ae44" /></S>;

export default function App() {
  return (
    <div className="w-[1920px] h-[1200px] overflow-hidden bg-white flex flex-col text-black text-[12px] leading-[16px] font-['Open_Sans','Noto_Sans',sans-serif]">
      <Defs />
      {/* title bar */}
      <div className="h-[23px] flex items-center pl-[2px] shrink-0">
        <Logo /><T w={163} className="ml-[5px]">*Neues Dokument 1 - Inkscape</T>
        <div className="flex-1" />
        <svg width="110" height="12" className="mr-[11px]" fill="none" stroke="#111"><path d="M0 5.500h10M46 3.500h7v7h-7zM48 3.500v-2h7v7h-2M91 1l10 10M101 1 91 11" /></svg>
      </div>
      {/* menu bar */}
      <div className="h-[21px] flex items-center pl-2 pt-[2px] border-b border-[#d9d9d9] shrink-0">
        {menus.map(([a, b, c, w, m]) => <T key={b + c} w={w} className={m}>{a}<U>{b}</U>{c}</T>)}
      </div>
      {/* command bar */}
      <div className="h-[30px] flex items-center pl-[2px] border-b border-[#d9d9d9] shrink-0">
        {commands.map((c, i) => c ? <div key={i} className="w-[26px] shrink-0 flex justify-center"><S s={18}>{c}</S></div> : <div key={i} className="w-3 shrink-0 flex justify-center"><Sep /></div>)}
      </div>
      {/* text tool bar */}
      <div className="h-[32px] flex items-center pl-[2px] border-b border-[#d9d9d9] shrink-0">
        <Combo className="w-[233px] h-[22px]"><T w={46}>Sofia Pro</T><div className="flex-1" /><S s={15} className="mr-[3px]"><path d="M3 1h8l4 4v12H3z" fill="#dfe8f3" stroke="#7e97b8" /><path d="M6 7h8v8H6z" fill="#4a76b4" /><path d="M6 9.500h7M6 12h7" stroke="#cde" /></S></Combo>
        <Combo className="w-[101px] h-[22px]"><T w={37}>Normal</T></Combo>
        <Sep className="ml-[5px] h-4" />
        <S s={16} className="ml-[11px]"><path d="M5 1H1v16h4M13 1h4v16h-8" stroke="#777" strokeWidth="1.300" /><path d="M3 4h8v2H8v8H6V6H3zM9 9h7v2h-2.500v5h-2v-5H9z" fill="#222" /></S>
        <Combo className="ml-[5px] w-[53px] h-[22px]"><T w={13}>30</T></Combo>
        <div className="ml-[10px] w-3 flex flex-col items-center font-bold text-[10px] leading-[8px]"><span>A</span><span className="text-[#245a94]">A</span></div>
        <SpinBox className="ml-[7px] w-[50px]"><T w={21}>1,25</T></SpinBox>
        <Combo className="w-[42px] h-[22px]" />
        <Cell on className="ml-px"><span className="text-[19px] font-extrabold">?</span></Cell>
        <Sep className="ml-[5px] h-4" />
        <Cell on className="ml-[6px]"><Al k={0} /></Cell><Cell><Al k={1} /></Cell><Cell><Al k={2} /></Cell>
        <Cell><S s={16} v={16}><rect x="1" y="0" width="14" height="16" rx="1" fill="url(#dots)" /></S></Cell>
        <Sep className="ml-[5px] h-4" />
        <Cell className="ml-[6px] italic font-extrabold text-[14px]"><span>x</span><span className="text-[10px] text-[#245a94] -mt-2">y</span></Cell>
        <Cell className="ml-px italic font-extrabold text-[14px]"><span>x</span><span className="text-[10px] text-[#245a94] mt-2">y</span></Cell>
        <Sep className="ml-[4px] mr-[5px] h-4" />
        {[0, 1, 2, 3, 4].map((k) => (
          <React.Fragment key={k}><div className="w-[30px] flex justify-center shrink-0"><KernIcon k={k} /></div><SpinBox className="w-[49px]"><T w={21}>0,00</T></SpinBox></React.Fragment>
        ))}
        <Sep className="ml-[6px] mr-[5px] h-4" />
        <Cell on><Dir k={0} /></Cell><Cell><Dir k={1} /></Cell><Cell><Dir k={2} /></Cell>
        <Sep className="ml-[5px] mr-[6px] h-4" />
        <Cell><Dir dis /></Cell><Cell><Dir dis /></Cell><Cell><Dir dis /></Cell>
        <Sep className="ml-[5px] mr-[6px] h-4" />
        <Cell on><Dir k={0} /></Cell><Cell><Dir k={3} /></Cell>
      </div>
      {/* workspace */}
      <div className="h-[1010px] flex shrink-0">
        <div className="w-[34px] pt-[2px] shrink-0 flex flex-col items-center">
          {tools.map((t, i) => <div key={i} className={"w-[30px] h-[30px] shrink-0 flex items-center justify-center " + (i === 13 ? "bg-[#cce8ff] border border-[#99d1ff]" : "")}><S s={24} v={24.5}>{t}</S></div>)}
        </div>
        <div className="w-[1513px] shrink-0 bg-[#f0f0f0] flex flex-col">
          <div className="h-[16px] flex shrink-0">
            <div className="w-[17px] flex justify-center pt-[2px] pr-[2px]"><S s={10} v={10}><path d="M2.500 5V3a2.500 2.500 0 0 1 5 0v2" stroke="#444" strokeWidth="1.300" /><rect x="1" y="5" width="8" height="4.500" fill="#e8a317" stroke="#5a3c00" /></S></div>
            <HRuler />
            <div className="pt-[2px] pl-[2px]"><S s={12} v={12}><path d="m8 8 3.500 3" stroke="#777" strokeWidth="1.500" /><circle cx="5.500" cy="5" r="3.800" fill="#ddd" stroke="#888" /><path d="M3.500 5h4" stroke="#666" /></S></div>
          </div>
          <div className="flex h-[978px] shrink-0">
            <VRuler /><Drawing />
            <div className="w-[16px] flex flex-col items-center bg-[#f0f0f0] pr-px">
              <div className="h-[14px] flex items-center rotate-180"><svg width="9" height="6"><path d="M1 1l3.500 3.500L8 1" fill="none" stroke="#555" strokeWidth="2" /></svg></div>
              <div className="mt-[332px] w-[15px] h-[266px] bg-[#cdcdcd] shrink-0" /><div className="flex-1" />
              <div className="h-[17px] flex items-center"><svg width="9" height="6"><path d="M1 1l3.500 3.500L8 1" fill="none" stroke="#555" strokeWidth="2" /></svg></div>
            </div>
          </div>
          <div className="h-[15px] flex items-center shrink-0">
            <svg width="7" height="9" className="ml-[22px] shrink-0"><path d="M5.500 1 2 4.500 5.500 8" fill="none" stroke="#555" strokeWidth="2" /></svg>
            <div className="ml-[270px] w-[854px] h-[15px] bg-[#cdcdcd] shrink-0" />
            <svg width="7" height="9" className="ml-[326px] shrink-0"><path d="M1.500 1 5 4.500 1.500 8" fill="none" stroke="#555" strokeWidth="2" /></svg>
            <svg width="9" height="10" className="ml-[9px] shrink-0"><path d="M1 1l7 5-6 3z" fill="#7a9a86" /><path d="M1 7l3 2" stroke="#337" /></svg>
          </div>
        </div>
        <Dock />
        <div className="flex-1 border-l border-[#e3e3e3] pt-px flex flex-col items-center">
          {snaps.map((s, i) => s ? <Cell key={i} on={s[1]}><S s={17} v={18}>{s[0]}</S></Cell> : <div key={i} className="h-3 w-4 flex items-center shrink-0"><div className="h-px w-full bg-[#a6a6a6]" /></div>)}
        </div>
      </div>
      {/* palette */}
      <div className="h-[16px] shrink-0 bg-[#f0f0f0] flex border-t border-[#a0a0a0]">
        <div className="w-[1910px] border-t border-t-black border-b border-b-white pl-px flex">
          <svg width="113" height="14" className="bg-white shrink-0"><path d="M0 0 113 14M0 14 113 0" stroke="#700" strokeWidth="1.600" /></svg>
          {palette.map(([w, c]) => <div key={c} className={"h-[14px] shrink-0 " + w + " " + c} />)}
        </div>
        <svg width="6" height="8" className="ml-[2px]"><path d="M5 0v8L0 4z" fill="#000" /></svg>
      </div>
      {/* status bar */}
      <div className="h-[28px] shrink-0 bg-[#f0f0f0] flex items-center">
        <div className="pl-[2px] w-[74px] pt-[2px] leading-[13px] flex flex-col items-start"><T w={42}>Füllung:</T><T w={37}>Kontur:</T></div>
        <div className="w-[51px] pl-[2px] pt-[2px] leading-[13px] flex flex-col items-start"><T w={19}>N/V</T><T w={19}>N/V</T></div>
        <T w={12} className="pt-px">O:</T>
        <div className="ml-[3px] w-[36px] h-[21px] border border-[#abadb3] border-r-0 flex items-center pl-[3px] pt-px text-[#888]">0</div><Spinner dis className="w-[10px] h-[18px]" />
        <div className="ml-[5px] w-px h-[28px] bg-[#c8c8c8]" />
        <S s={12} v={12} className="ml-[5px]"><path d="M1 7c2-5 8-5 10 0-2 4-8 4-10 0zM3 4 2 2M6 3V1M9 4l1-2" stroke="#222" fill="#999" /><circle cx="6" cy="6.500" r="2" fill="#222" /></S>
        <S s={11} v={12} className="ml-[8px]"><path d="M3 3a2.500 2 0 0 1 5 0v3" stroke="#555" /><rect x="2" y="6" width="7" height="5" fill="#ddd6b8" stroke="#555" /></S>
        <Combo className="ml-[4px] w-[77px] h-[25px] font-bold italic text-[11px]"><T w={42} className="ml-[4px] pt-px">•#g1415</T></Combo>
        <T w={301} className="ml-[2px] pt-[2px]">Text schreiben; <b>Eingabe</b>, um eine neue Zeile zu beginnen.</T>
        <div className="flex-1" />
        <div className="w-px h-[28px] bg-[#a0a0a0]" />
        <div className="w-[22px] pl-[3px] pt-[2px] leading-[13px]">X:<br />Y:</div>
        <div className="w-[51px] font-['DejaVu_Sans_Mono'] leading-[13px] flex flex-col items-start"><T w={42}>214,31</T><T w={42}>212,04</T></div>
        <T w={9} className="pt-px">Z:</T>
        <div className="ml-[3px] w-[45px] h-[21px] border border-[#abadb3] border-r-0 bg-white flex items-center pl-[9px] pt-px"><T w={21}>70%</T></div>
        <Spinner className="w-[11px] h-[20px] mr-px" />
      </div>
      {/* taskbar */}
      <div className="h-10 shrink-0 bg-[#060a11] text-[#f2f2f2] flex items-center">
        <S s={16} v={16} className="ml-4"><path d="M0 2.300 7 1.300v6.300H0zM7.800 1.200 16 0v7.600H7.800zM0 8.400h7v6.300l-7-1zM7.800 8.400H16V16l-8.200-1.200z" fill="#fff" /></S>
        <S s={17} v={17} className="ml-[32px]"><circle cx="10" cy="6.500" r="5" stroke="#fff" strokeWidth="1.300" /><path d="m6.500 10.500-5.500 6" stroke="#fff" strokeWidth="1.300" /></S>
        <S s={17} v={17} className="ml-[30px]"><path d="M1.500 4.500h9v8h-9zM1.500 1v1.500h9V1M1.500 16v-1.500h9V16M14.500 1v3M14.500 8.500V16" stroke="#fff" strokeWidth="1.200" /><path d="M13.500 5h2.500v2.500h-2.500z" fill="#fff" /></S>
        <S s={23} v={24} className="ml-[31px]"><circle cx="12" cy="12" r="11.500" fill="#fbc116" /><path d="M2 6.200A11.500 11.500 0 0 1 22 6.500H12A5.500 5.500 0 0 0 7 14.600z" fill="#e33b2e" /><path d="M2 6.200 7.200 15c1.200 2 3.500 2.800 5.500 2.500L10 23.400A11.500 11.500 0 0 1 2 6.200z" fill="#2da94f" /><circle cx="12" cy="12" r="5.300" fill="#fff" /><circle cx="12" cy="12" r="4.300" fill="#4285f4" /></S>
        <div className="ml-[18px] w-[152px] h-10 border-b-2 border-[#76b9ed] flex items-center pl-[7px] pt-[2px]"><Folder /><T w={93} className="ml-[9px]">Ursprungsdateien</T></div>
        <div className="ml-2 w-[152px] h-10 border-b-2 border-[#76b9ed] flex items-center pl-[7px] pt-[2px]"><Folder /><T w={112} className="ml-[9px]">Flex_Box_-_A_wood...</T></div>
        <div className="ml-[5px] w-[160px] h-10 border-b-2 border-[#76b9ed] bg-[#3b4046] flex items-center pl-[11px] pt-[2px]"><Logo s={23} taskbar /><T w={109} className="ml-[4px]">*Neues Dokument ...</T></div>
        <div className="flex-1" />
        <S s={15} v={15}><circle cx="10.500" cy="3.500" r="2.500" stroke="#fff" /><path d="M7 9c1-4 7-4 7.500 1" stroke="#fff" /><circle cx="5" cy="8" r="2.200" stroke="#fff" /><path d="M1 15c.500-6 7.500-6 8 0" stroke="#fff" /></S>
        <S s={12} v={12} className="ml-[22px]"><path d="m1 8.500 5-5 5 5" stroke="#fff" strokeWidth="1.300" /></S>
        <S s={17} v={17} className="ml-[10px]"><path d="M6 3.500h10.500v8H4.500V9M10.500 12v3M7 15.500h7M1 2.500h4v4H1zM3 7v8" stroke="#fff" /></S>
        <S s={17} v={17} className="ml-[6px]"><path d="M1 6.500h3L7.500 3v11L4 10.500H1zM10 6c1.500 1.500 1.500 3.500 0 5M12 4c2.500 2.500 2.500 6.500 0 9" stroke="#fff" /><path d="M14 2.500c3.500 3.500 3.500 8.500 0 12" stroke="#777" /></S>
        <S s={17} v={17} className="ml-[8px]"><path d="m5 1.500 3.500 2.300L5 6 1.300 3.800zM12 1.500l3.700 2.300L12 6 8.500 3.800zM5 6.300l3.500 2.200L5 10.800 1.300 8.500zM12 6.300l3.700 2.200-3.700 2.300-3.500-2.300zM8.500 10l3.500 2.200-3.500 2.200L5 12.200z" fill="#fff" /></S>
        <T w={22} className="ml-[10px]">DEU</T>
        <div className="ml-[11px] w-[57px] flex flex-col items-center leading-[18px]"><T w={26}>14:51</T><T w={54}>05.06.2019</T></div>
        <S s={17} v={17} className="ml-[16px]"><path d="M1 1h15v12h-5l-2.500 3L6 13H1z" fill="#fff" /><path d="M4 4.500h9M4 7h9M4 9.500h6" stroke="#060a11" /></S>
        <div className="ml-[21px] mr-[3px] w-px h-10 bg-[#555]" />
      </div>
    </div>
  );
}
